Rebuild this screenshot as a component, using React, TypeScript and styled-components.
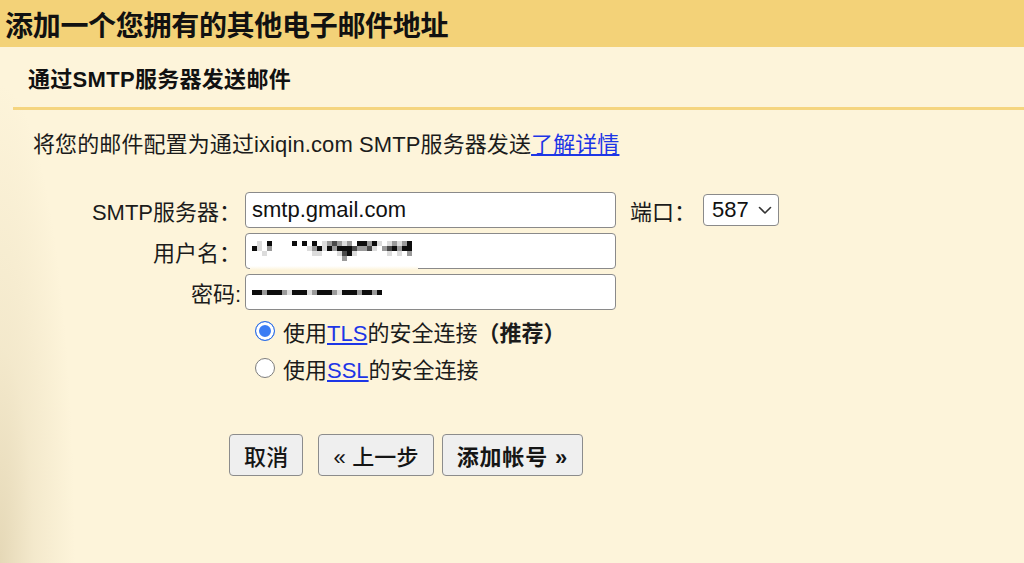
import React from "react";
import styled, { createGlobalStyle } from "styled-components";

const GlobalStyle = createGlobalStyle`
  html, body { margin: 0; padding: 0; }
  body {
    width: 1024px;
    height: 563px;
    overflow: hidden;
    background: #fdf4da;
    font-family: "Liberation Sans", "Noto Sans CJK SC", sans-serif;
    color: #1b1b1b;
  }
`;

const Page = styled.div`
  width: 1024px;
  height: 563px;
  display: flex;
  flex-direction: column;
  background-color: #fdf4da;
  background-image: radial-gradient(
    ellipse 75px 480px at 0% 100%,
    rgba(200, 182, 140, 0.45) 0%,
    rgba(200, 182, 140, 0.18) 45%,
    rgba(200, 182, 140, 0) 100%
  );
`;

const Header = styled.div`
  height: 47px;
  background: #f3d278;
  display: flex;
  align-items: center;
  padding-left: 5px;
  flex-shrink: 0;
`;

const Title = styled.h1`
  margin: 0;
  font-size: 28px;
  font-weight: 700;
  color: #111;
  letter-spacing: -0.3px;
`;

const SubHeader = styled.div`
  height: 60px;
  display: flex;
  align-items: center;
  padding-left: 28px;
`;

const SubTitle = styled.h2`
  margin: 0;
  font-size: 22px;
  font-weight: 700;
  color: #111;
  letter-spacing: 0.3px;
`;

const Rule = styled.div`
  margin-left: 13px;
  height: 3px;
  background: #f5d57f;
`;

const Description = styled.p`
  margin: 20px 0 0 0;
  padding-left: 33px;
  font-size: 22px;
  line-height: 30px;
  letter-spacing: 0.1px;
  color: #1b1b1b;
`;

const Link = styled.a`
  color: #1d36e6;
  text-decoration: underline;
  text-underline-offset: 2px;
  cursor: pointer;
`;

const FormGrid = styled.div`
  margin-top: 32px;
  display: grid;
  grid-template-columns: 241px 371px auto;
  grid-auto-rows: 36px;
  column-gap: 4px;
  row-gap: 5px;
  align-items: center;
`;

const Label = styled.label`
  font-size: 22px;
  text-align: right;
  color: #1b1b1b;
  white-space: nowrap;
`;

const InputBox = styled.div`
  position: relative;
  box-sizing: border-box;
  height: 36px;
  background: #fff;
  border: 1px solid #8a8a8a;
  border-radius: 4px;
  display: flex;
  align-items: center;
  padding-left: 6px;
  font-size: 22px;
  color: #111;
`;

const TextInput = styled.input`
  box-sizing: border-box;
  width: 371px;
  height: 36px;
  background: #fff;
  border: 1px solid #8a8a8a;
  border-radius: 4px;
  padding: 0 6px;
  font-family: "Liberation Sans", "Noto Sans CJK SC", sans-serif;
  font-size: 22px;
  color: #111;
  outline: none;
`;

const PatchEdge = styled.span`
  position: absolute;
  left: 4px;
  width: 168px;
  bottom: -5px;
  height: 7px;
  background: linear-gradient(#ffffff 0%, #fdf3d9 60%, #fdf3d9 100%);
`;

const PortGroup = styled.div`
  display: flex;
  align-items: center;
  margin-left: 10px;
  gap: 7px;
`;

const SelectBox = styled.div`
  box-sizing: border-box;
  width: 76px;
  height: 32px;
  background: #fff;
  border: 1px solid #8a8a8a;
  border-radius: 4px;
  display: flex;
  align-items: center;
  justify-content: space-between;
  padding: 0 6px 0 8px;
  font-size: 22px;
  color: #111;
`;

const PixelGrid = styled.div<{ $cols: number; $cell: number }>`
  display: grid;
  grid-template-columns: repeat(${(p) => p.$cols}, ${(p) => p.$cell}px);
  grid-auto-rows: ${(p) => p.$cell}px;
`;

const shades: Record<string, string> = {
  ".": "transparent",
  l: "#dcdcdc",
  g: "#9a9a9a",
  d: "#4a4a4a",
  k: "#0d0d0d",
};

const Pixel = styled.span<{ $shade: string }>`
  background: ${(p) => shades[p.$shade] ?? "transparent"};
`;

function Pixels({ rows, cell }: { rows: string[]; cell: number }) {
  const cols = Math.max(...rows.map((r) => r.length));
  return (
    <PixelGrid $cols={cols} $cell={cell}>
      {rows.map((r, ri) =>
        r
          .padEnd(cols, ".")
          .split("")
          .map((c, ci) => <Pixel key={`${ri}-${ci}`} $shade={c} />)
      )}
    </PixelGrid>
  );
}

const userRows = [
  ".l.k....k.k.k.lgdglg.kkgkl.lglgk",
  "kl.g.......lgklkgkkkdggdl.gdkgkk",
  "..l.........ll...ldkl......l.l.g",
  "..................g.............",
];

const passRows = ["kkgkkkglkkklgkkkglkkkgkkgk"];

const RadioList = styled.div`
  margin-top: 2px;
  margin-left: 255px;
  display: flex;
  flex-direction: column;
`;

const RadioRow = styled.label`
  height: 37px;
  display: flex;
  align-items: center;
  gap: 8px;
  font-size: 22px;
  color: #1b1b1b;
`;

const RadioDot = styled.span<{ $checked?: boolean }>`
  box-sizing: border-box;
  width: 20px;
  height: 20px;
  border-radius: 50%;
  flex-shrink: 0;
  ${(p) =>
    p.$checked
      ? `background: #3a7cf4; border: 1.5px solid #2f6fe6; box-shadow: inset 0 0 0 3px #ffffff;`
      : `background: #ffffff; border: 1.5px solid #7d7d7d;`}
`;

const Strong = styled.b`
  font-weight: 700;
`;

const ButtonRow = styled.div`
  margin-top: 48px;
  margin-left: 229px;
  display: flex;
  align-items: center;
  gap: 8px;
`;

const Button = styled.button<{ $bold?: boolean; $gapAfter?: number }>`
  box-sizing: border-box;
  height: 42px;
  padding: 0 14px;
  background: #efefef;
  border: 1.5px solid #8c8c8c;
  border-radius: 4px;
  font-family: "Liberation Sans", "Noto Sans CJK SC", sans-serif;
  font-size: 22px;
  font-weight: ${(p) => (p.$bold ? 700 : 500)};
  letter-spacing: ${(p) => (p.$bold ? "0.8px" : "0.2px")};
  color: #151515;
  margin-right: ${(p) => p.$gapAfter ?? 0}px;
  cursor: pointer;
`;

function Chevron() {
  return (
    <svg width="14" height="10" viewBox="0 0 14 10" fill="none">
      <path d="M1.5 2.5 L7 8 L12.5 2.5" stroke="#333" strokeWidth="1.6" strokeLinecap="round" strokeLinejoin="round" />
    </svg>
  );
}

export default function App() {
  return (
    <>
      <GlobalStyle />
      <Page>
        <Header>
          <Title>添加一个您拥有的其他电子邮件地址</Title>
        </Header>
        <SubHeader>
          <SubTitle>通过SMTP服务器发送邮件</SubTitle>
        </SubHeader>
        <Rule />
        <Description>
          将您的邮件配置为通过ixiqin.com SMTP服务器发送<Link>了解详情</Link>
        </Description>

        <FormGrid>
          <Label>SMTP服务器：</Label>
          <TextInput defaultValue="smtp.gmail.com" readOnly />
          <PortGroup>
            <Label>端口：</Label>
            <SelectBox>
              <span>587</span>
              <Chevron />
            </SelectBox>
          </PortGroup>

          <Label>用户名：</Label>
          <InputBox>
            <Pixels rows={userRows} cell={5} />
            <PatchEdge />
          </InputBox>
          <span />

          <Label>密码:</Label>
          <InputBox>
            <Pixels rows={passRows} cell={5} />
          </InputBox>
          <span />
        </FormGrid>

        <RadioList>
          <RadioRow>
            <RadioDot $checked />
            <span>
              使用<Link>TLS</Link>的安全连接<Strong>（推荐）</Strong>
            </span>
          </RadioRow>
          <RadioRow>
            <RadioDot />
            <span>
              使用<Link>SSL</Link>的安全连接
            </span>
          </RadioRow>
        </RadioList>

        <ButtonRow>
          <Button $gapAfter={7}>取消</Button>
          <Button>« 上一步</Button>
          <Button $bold>添加帐号 »</Button>
        </ButtonRow>
      </Page>
    </>
  );
}
